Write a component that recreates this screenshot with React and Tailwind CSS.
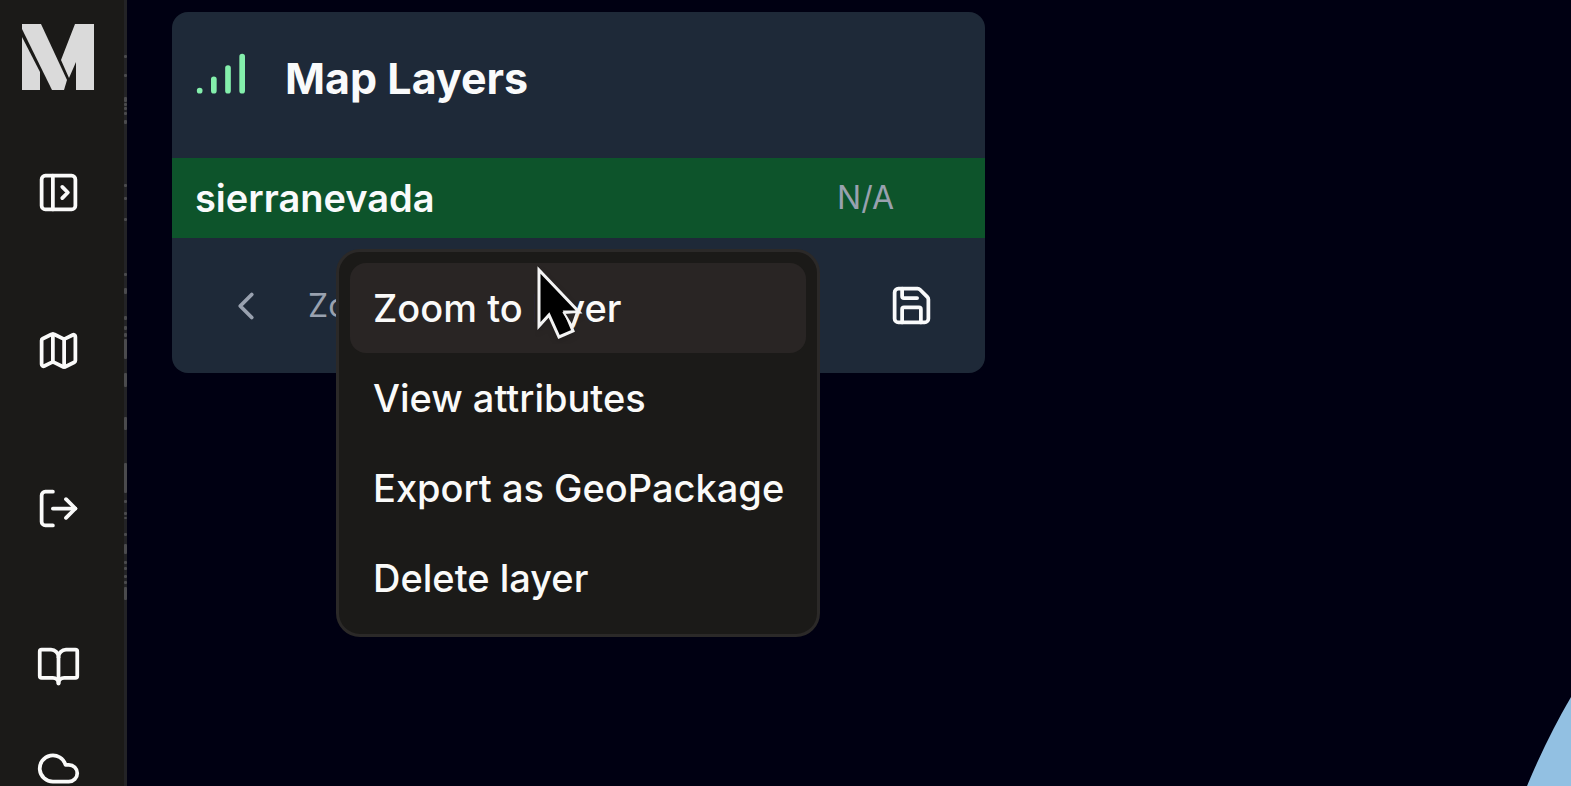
import { PanelLeftOpen, Map, LogOut, BookOpen, Cloud, ChevronLeft, Save, SignalHigh } from "lucide-react";

const nav = [
  { label: "Expand sidebar", Icon: PanelLeftOpen },
  { label: "Maps", Icon: Map },
  { label: "Log out", Icon: LogOut },
  { label: "Documentation", Icon: BookOpen },
];

const actions = ["Zoom to layer", "View attributes", "Export as GeoPackage", "Delete layer"];

// [y, height] of the faint marks along the sidebar's edge
const marks = [
  [55, 3], [74, 3], [97, 5], [103, 3], [107, 3], [112, 3], [120, 4], [184, 3], [197, 3], [218, 3],
  [273, 3], [288, 6], [316, 4], [326, 4], [333, 4], [339, 20], [373, 14], [417, 13], [463, 30],
  [500, 3], [512, 3], [517, 2], [533, 3], [544, 10], [561, 3], [567, 3], [575, 3], [581, 3], [587, 13],
];

function Logo() {
  return (
    <svg viewBox="0 0 72 66" className="h-[66px] w-[72px]" fill="#dadada" aria-hidden="true">
      <path d="M0 13 18 48V66H0Z" />
      <path d="M0 0H19L45 56 42 66H30L0 5Z" />
      <path d="M53 0H72V66H54V38L47 54 39 36Z" />
    </svg>
  );
}

function Pointer() {
  return (
    <svg viewBox="0 0 50 80" className="absolute left-[196px] top-[12px] h-[80px] w-[50px]" aria-hidden="true">
      <path d="M0 20H20L31 45V60H0Z" fill="#292524" />
      <path d="M4 6V62L14 51 24 73 38 67 30 48H44Z" fill="#000" stroke="#f4f4f4" strokeWidth="3" className="drop-shadow-md" />
      <path d="M29 49 42 48 37 62Z" fill="#292524" stroke="#f4f4f4" strokeWidth="2" />
    </svg>
  );
}

export default function App() {
  return (
    <div className="relative flex h-screen overflow-hidden bg-[#000012] font-['Inter',sans-serif]">
      <svg viewBox="0 0 50 100" className="absolute bottom-0 right-0 h-[100px] w-[50px]" aria-hidden="true">
        <path d="M50 11Q26 52 6 100H50Z" fill="#92c0e2" />
      </svg>
      <aside className="relative flex w-[127px] shrink-0 flex-col items-center border-r-3 border-[#232326] bg-[#1b1a18] pt-6 pr-2 text-stone-50">
        <svg className="absolute top-0 -right-[3px] h-[620px] w-[3px]" fill="#4a4a4d" aria-hidden="true">
          {marks.map(([y, h]) => (
            <rect key={y} x="0" y={y} width="3" height={h} rx="1" />
          ))}
        </svg>
        <a href="#" aria-label="Home"><Logo /></a>
        <nav className="mt-20 flex flex-col gap-[113px]">
          {nav.map(({ label, Icon }) => (
            <button key={label} aria-label={label}><Icon size={45} /></button>
          ))}
        </nav>
        <button aria-label="Cloud" className="mt-[57px]"><Cloud size={45} /></button>
      </aside>
      <main className="grow pl-[45px] pt-3">
        <section className="relative w-[813px] rounded-2xl bg-[#1e2938] text-gray-50">
          <header className="flex h-[146px] items-start gap-[23px] px-[22px] pt-[22px]">
            <SignalHigh size={68} className="text-[#84efac]" />
            <h1 className="text-[43px] leading-[88px] font-bold">Map Layers</h1>
          </header>
          <div className="flex h-[80px] items-center justify-between bg-[#0d542b] pl-[23px] pr-[91px]">
            <span className="text-[38px] font-semibold">sierranevada</span>
            <span className="text-[32px] text-gray-400">N/A</span>
          </div>
          <footer className="flex h-[135px] items-center px-[51px] text-[32px] text-gray-400">
            <button aria-label="Previous"><ChevronLeft size={46} /></button>
            <span className="ml-[39px] grow">Zo</span>
            <button aria-label="Save" className="text-gray-50"><Save size={45} /></button>
          </footer>
          <div role="menu" className="absolute left-[164px] top-[237px] w-[484px] rounded-3xl border-3 border-[#2b2928] bg-[#1b1a18] p-[11px] text-stone-50">
            {actions.map((a, i) => (
              <button key={a} role="menuitem" className={`block h-[90px] w-full rounded-2xl px-[23px] text-left text-[38px] font-medium whitespace-nowrap ${i === 0 ? "bg-[#292524]" : ""}`}>
                {a}
              </button>
            ))}
            <Pointer />
          </div>
        </section>
      </main>
    </div>
  );
}
